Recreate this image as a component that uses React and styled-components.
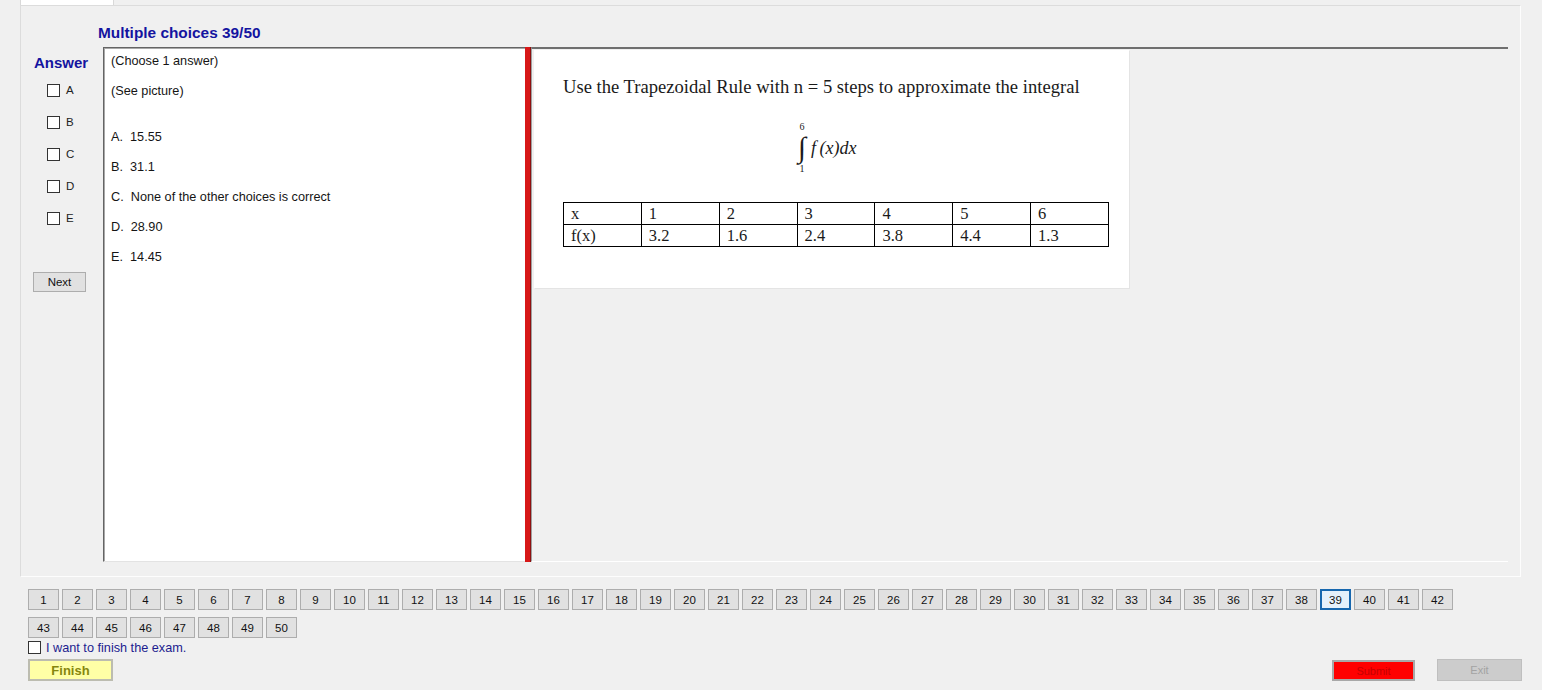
import React from 'react'
import styled, { createGlobalStyle } from 'styled-components'

const GlobalStyle = createGlobalStyle`
  html, body {
    margin: 0;
    padding: 0;
    background: #f0f0f0;
  }
  body {
    font-family: "Liberation Sans", Arial, sans-serif;
    color: #111;
  }
`

const choices = ['A', 'B', 'C', 'D', 'E']
const answers = [
  'A.  15.55',
  'B.  31.1',
  'C.  None of the other choices is correct',
  'D.  28.90',
  'E.  14.45',
]
const xs = ['1', '2', '3', '4', '5', '6']
const fx = ['3.2', '1.6', '2.4', '3.8', '4.4', '1.3']
const pages = Array.from({ length: 50 }, (_, i) => i + 1)

export default function App() {
  return (
    <Page>
      <GlobalStyle />
      <TabStrip>
        <Tab />
      </TabStrip>

      <Panel>
        <Title>Multiple choices 39/50</Title>
        <Content>
          <LeftCol>
            <AnswerLabel>Answer</AnswerLabel>
            {choices.map(c => (
              <ChoiceRow key={c}>
                <Box />
                <span>{c}</span>
              </ChoiceRow>
            ))}
            <NextButton>Next</NextButton>
          </LeftCol>

          <TextBox>
            <Line>(Choose 1 answer)</Line>
            <Line $extra={16}>(See picture)</Line>
            {answers.map(a => (
              <Line key={a}>{a}</Line>
            ))}
          </TextBox>

          <Splitter />

          <PicturePanel>
            <Picture>
              <Sentence>
                Use the Trapezoidal Rule with n = 5 steps to approximate the integral
              </Sentence>
              <Integral>
                <Limits>
                  <Lim>6</Lim>
                  <Sign>∫</Sign>
                  <Lim>1</Lim>
                </Limits>
                <Expr>f (x)dx</Expr>
              </Integral>
              <ValueTable>
                <tbody>
                  <tr>
                    <td>x</td>
                    {xs.map(v => (
                      <td key={v}>{v}</td>
                    ))}
                  </tr>
                  <tr>
                    <td>f(x)</td>
                    {fx.map((v, i) => (
                      <td key={i}>{v}</td>
                    ))}
                  </tr>
                </tbody>
              </ValueTable>
            </Picture>
          </PicturePanel>
        </Content>
      </Panel>

      <Bottom>
        <PageGrid>
          {pages.map(p => (
            <PageButton key={p} $active={p === 39}>
              {p}
            </PageButton>
          ))}
        </PageGrid>
        <FinishCheck>
          <Box />
          <span>I want to finish the exam.</span>
        </FinishCheck>
        <BottomBar>
          <FinishButton>Finish</FinishButton>
          <RightGroup>
            <SubmitButton>Submit</SubmitButton>
            <ExitButton>Exit</ExitButton>
          </RightGroup>
        </BottomBar>
      </Bottom>
    </Page>
  )
}

const Page = styled.div`
  width: 1542px;
  height: 690px;
  overflow: hidden;
  background: #f0f0f0;
`

const TabStrip = styled.div`
  height: 5px;
  display: flex;
  padding-left: 20px;
`

const Tab = styled.div`
  width: 92px;
  background: #fff;
  border-left: 1px solid #d9d9d9;
  border-right: 1px solid #d9d9d9;
`

const Panel = styled.div`
  margin-left: 20px;
  width: 1501px;
  height: 572px;
  box-sizing: border-box;
  border: 1px solid;
  border-color: #dcdcdc #fdfdfd #fdfdfd #dcdcdc;
  display: flex;
  flex-direction: column;
  padding: 0 12px 14px 0;
`

const Title = styled.div`
  height: 41px;
  box-sizing: border-box;
  padding: 18px 0 0 77px;
  font-size: 15.4px;
  font-weight: bold;
  line-height: 17px;
  color: #1414a0;
`

const Content = styled.div`
  display: grid;
  grid-template-columns: 82px 422px 6px 1fr;
  height: 515px;
`

const LeftCol = styled.div`
  display: flex;
  flex-direction: column;
`

const AnswerLabel = styled.div`
  padding: 8px 0 3px 13px;
  line-height: 16px;
  font-size: 15px;
  font-weight: bold;
  color: #1414a0;
`

const ChoiceRow = styled.div`
  height: 32px;
  display: flex;
  align-items: center;
  gap: 6px;
  padding-left: 26px;
  font-size: 11.5px;
  color: #222;
`

const Box = styled.span`
  display: inline-block;
  flex: none;
  width: 13px;
  height: 13px;
  box-sizing: border-box;
  border: 1px solid #333;
  background: #fff;
`

const NextButton = styled.div`
  margin: 38px 0 0 12px;
  width: 53px;
  height: 20px;
  box-sizing: border-box;
  border: 1px solid #adadad;
  background: #e1e1e1;
  font-size: 11.5px;
  display: flex;
  align-items: center;
  justify-content: center;
`

const TextBox = styled.div`
  background: #fff;
  border-top: 1px solid #646464;
  border-left: 1px solid #646464;
  border-bottom: 1px solid #e3e3e3;
  box-shadow: inset 1px 1px 0 #a8a8a8;
  padding-left: 7px;
  font-size: 12.7px;
  color: #151515;
`

const Line = styled.div`
  line-height: 26px;
  margin-bottom: ${p => 4 + (p.$extra || 0)}px;
  white-space: pre;
`

const Splitter = styled.div`
  background: #d71818;
  border-right: 1px solid #8e1010;
`

const PicturePanel = styled.div`
  border-top: 2px solid #6f6f6f;
  border-left: 1px solid #a0a0a0;
  border-bottom: 1px solid #fff;
  padding: 1px 0 0 2px;
`

const Picture = styled.div`
  width: 595px;
  height: 238px;
  box-sizing: border-box;
  background: #fff;
  box-shadow: 1px 1px 0 #e4e4e4;
  display: flex;
  flex-direction: column;
  padding-left: 29px;
  font-family: "Liberation Serif", "Times New Roman", serif;
  color: #1a1a1a;
`

const Sentence = styled.div`
  margin-top: 27px;
  font-size: 18.6px;
  line-height: 20px;
  white-space: nowrap;
`

const Integral = styled.div`
  margin: 25px 0 0 233px;
  display: flex;
  align-items: center;
`

const Limits = styled.div`
  display: flex;
  flex-direction: column;
  align-items: center;
  width: 12px;
`

const Lim = styled.div`
  font-size: 10px;
  line-height: 10px;
`

const Sign = styled.div`
  font-size: 29px;
  line-height: 30px;
  margin: 0 0 2px;
`

const Expr = styled.div`
  margin-left: 3px;
  font-size: 18px;
  font-style: italic;
  word-spacing: -1px;
`

const ValueTable = styled.table`
  margin-top: 28px;
  width: 546px;
  border-collapse: collapse;
  table-layout: fixed;
  font-size: 16.5px;

  td {
    height: 21px;
    border: 1px solid #000;
    padding: 0 0 0 7px;
    line-height: 20px;
  }
`

const Bottom = styled.div`
  padding: 12px 20px 0 28px;
`

const PageGrid = styled.div`
  display: flex;
  flex-wrap: wrap;
  width: 1428px;
  gap: 7px 3px;
`

const PageButton = styled.div`
  width: 31px;
  height: 21px;
  box-sizing: border-box;
  border: ${p => (p.$active ? '2px solid #1767ae' : '1px solid #adadad')};
  background: ${p => (p.$active ? '#e5f1fb' : '#e1e1e1')};
  font-size: 11.5px;
  color: #111;
  display: flex;
  align-items: center;
  justify-content: center;
`

const FinishCheck = styled.div`
  margin-top: 3px;
  height: 13px;
  display: flex;
  align-items: center;
  gap: 5px;
  font-size: 12.7px;
  color: #1c1c8f;
`

const BottomBar = styled.div`
  margin-top: 5px;
  display: flex;
  justify-content: space-between;
  align-items: flex-start;
`

const FinishButton = styled.div`
  width: 85px;
  height: 22px;
  box-sizing: border-box;
  border: 2px solid #bcbcb0;
  background: #ffffa6;
  color: #86860e;
  font-size: 13px;
  font-weight: bold;
  display: flex;
  align-items: center;
  justify-content: center;
`

const RightGroup = styled.div`
  display: flex;
  gap: 22px;
`

const SubmitButton = styled.div`
  margin-top: 1px;
  width: 83px;
  height: 21px;
  box-sizing: border-box;
  border: 2px solid #a8a8a8;
  background: #ff0000;
  color: #c40000;
  font-size: 11px;
  display: flex;
  align-items: center;
  justify-content: center;
`

const ExitButton = styled.div`
  width: 85px;
  height: 22px;
  box-sizing: border-box;
  border: 1px solid #bfbfbf;
  background: #cccccc;
  color: #a3a3a3;
  font-size: 11px;
  display: flex;
  align-items: center;
  justify-content: center;
`
